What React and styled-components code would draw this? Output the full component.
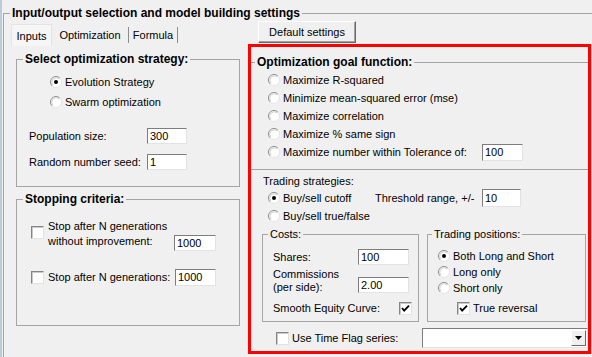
import React from 'react'
import styled, { createGlobalStyle } from 'styled-components'

const GlobalStyle = createGlobalStyle`
  html, body {
    margin: 0;
    padding: 0;
    background: #f0f0f0;
  }
  body {
    font-family: "Liberation Sans", Arial, sans-serif;
    font-size: 11px;
    color: #000;
  }
  * {
    box-sizing: border-box;
  }
`

const Radio = ({ checked }) => (
    <RadioIcon width="12" height="12" viewBox="0 0 12 12">
        <circle cx="6" cy="6" r="5.5" fill="#fff" />
        <path d="M2.1 9.9 A5.5 5.5 0 0 1 9.9 2.1" fill="none" stroke="#8d8d8d" strokeWidth="1" />
        <path d="M2.9 9.1 A4.4 4.4 0 0 1 9.1 2.9" fill="none" stroke="#d2d2d2" strokeWidth="1" />
        <path d="M9.9 2.1 A5.5 5.5 0 0 1 2.1 9.9" fill="none" stroke="#e4e4e4" strokeWidth="1" />
        {checked && <circle cx="6" cy="6" r="2" fill="#000" />}
    </RadioIcon>
)

const Check = ({ checked }) => (
    <CheckBox>
        {checked && (
            <svg width="11" height="11" viewBox="0 0 11 11">
                <polyline points="2,5 4.2,7.6 9,2.6" fill="none" stroke="#000" strokeWidth="1.8" />
            </svg>
        )}
    </CheckBox>
)

const App = () => {
    return (
        <>
            <GlobalStyle />
            <Window>
                <OuterGroup>
                    <GroupTitle $bold $offset={6}>Input/output selection and model building settings</GroupTitle>
                    <Columns>
                        <LeftColumn>
                            <TabStrip>
                                <Tab $w={41} $faint>Inputs</Tab>
                                <Tab $w={77} $sep>Optimization</Tab>
                                <Tab $w={49} $sep>Formula</Tab>
                            </TabStrip>
                            <TabPage>
                                <GroupBox $w={224} $mt={7} $pb={15}>
                                    <GroupTitle $bold $offset={6}>Select optimization strategy:</GroupTitle>
                                    <Row $indent={33} $mt={7}>
                                        <Radio checked />
                                        <OptionLabel>Evolution Strategy</OptionLabel>
                                    </Row>
                                    <Row $indent={33} $mt={2}>
                                        <Radio />
                                        <OptionLabel>Swarm optimization</OptionLabel>
                                    </Row>
                                    <Row $indent={12} $mt={16}>
                                        <FieldLabel $w={118}>Population size:</FieldLabel>
                                        <TextBox $w={40} $h={16} defaultValue="300" readOnly />
                                    </Row>
                                    <Row $indent={12} $mt={8}>
                                        <FieldLabel $w={118}>Random number seed:</FieldLabel>
                                        <TextBox $w={40} $h={16} defaultValue="1" readOnly />
                                    </Row>
                                </GroupBox>

                                <GroupBox $w={224} $mt={6} $pb={39}>
                                    <GroupTitle $bold $offset={6}>Stopping criteria:</GroupTitle>
                                    <Row $indent={14} $mt={13} $top $h={30}>
                                        <CheckSlot $mt={7}><Check /></CheckSlot>
                                        <MultiLabel $w={126} $lh={15}>Stop after N generations<br />without improvement:</MultiLabel>
                                        <TextBox $w={42} $h={16} $mt={16} defaultValue="1000" readOnly />
                                    </Row>
                                    <Row $indent={14} $mt={19}>
                                        <Check />
                                        <MultiLabel $w={127} $lh={15}>Stop after N generations:</MultiLabel>
                                        <TextBox $w={41} $h={17} defaultValue="1000" readOnly />
                                    </Row>
                                </GroupBox>
                            </TabPage>
                        </LeftColumn>

                        <RightColumn>
                            <DefaultButton>Default settings</DefaultButton>
                            <RedPanel>
                                <GoalGroup>
                                    <GroupTitle $bold $offset={4}>Optimization goal function:</GroupTitle>
                                    <Row $indent={17} $mt={2}>
                                        <Radio />
                                        <OptionLabel>Maximize R-squared</OptionLabel>
                                    </Row>
                                    <Row $indent={17}>
                                        <Radio />
                                        <OptionLabel>Minimize mean-squared error (mse)</OptionLabel>
                                    </Row>
                                    <Row $indent={17}>
                                        <Radio />
                                        <OptionLabel>Maximize correlation</OptionLabel>
                                    </Row>
                                    <Row $indent={17}>
                                        <Radio />
                                        <OptionLabel>Maximize % same sign</OptionLabel>
                                    </Row>
                                    <Row $indent={17}>
                                        <Radio />
                                        <OptionLabel $w={199}>Maximize number within Tolerance of:</OptionLabel>
                                        <TextBox $w={41} $h={17} defaultValue="100" readOnly />
                                    </Row>
                                </GoalGroup>

                                <SectionLabel>Trading strategies:</SectionLabel>
                                <Row $indent={17}>
                                    <Radio checked />
                                    <OptionLabel $w={92}>Buy/sell cutoff</OptionLabel>
                                    <FieldLabel $w={107}>Threshold range, +/-</FieldLabel>
                                    <TextBox $w={39} $h={18} defaultValue="10" readOnly />
                                </Row>
                                <Row $indent={17}>
                                    <Radio />
                                    <OptionLabel>Buy/sell true/false</OptionLabel>
                                </Row>

                                <SubGroups>
                                    <GroupBox $w={157} $pb={5}>
                                        <GroupTitle $offset={5}>Costs:</GroupTitle>
                                        <Row $indent={10} $mt={7}>
                                            <FieldLabel $w={85}>Shares:</FieldLabel>
                                            <TextBox $w={51} $h={16} defaultValue="100" readOnly />
                                        </Row>
                                        <Row $indent={10} $mt={2} $top $h={26}>
                                            <MultiLabel $w={85} $lh={13}>Commissions<br />(per side):</MultiLabel>
                                            <TextBox $w={51} $h={16} $mt={9} defaultValue="2.00" readOnly />
                                        </Row>
                                        <Row $indent={10} $mt={6} $h={16}>
                                            <FieldLabel $w={126}>Smooth Equity Curve:</FieldLabel>
                                            <Check checked />
                                        </Row>
                                    </GroupBox>
                                    <GroupBox $w={159} $pb={5}>
                                        <GroupTitle $offset={4}>Trading positions:</GroupTitle>
                                        <Row $indent={10} $mt={7} $h={16}>
                                            <Radio checked />
                                            <OptionLabel>Both Long and Short</OptionLabel>
                                        </Row>
                                        <Row $indent={10} $h={16}>
                                            <Radio />
                                            <OptionLabel>Long only</OptionLabel>
                                        </Row>
                                        <Row $indent={10} $h={16}>
                                            <Radio />
                                            <OptionLabel>Short only</OptionLabel>
                                        </Row>
                                        <Row $indent={29} $mt={4} $h={16}>
                                            <Check checked />
                                            <OptionLabel>True reversal</OptionLabel>
                                        </Row>
                                    </GroupBox>
                                </SubGroups>

                                <Row $indent={25} $mt={6} $h={20}>
                                    <Check />
                                    <OptionLabel $w={130}>Use Time Flag series:</OptionLabel>
                                    <Combo>
                                        <ComboButton>
                                            <svg width="7" height="4" viewBox="0 0 7 4">
                                                <polygon points="0,0 7,0 3.5,4" fill="#000" />
                                            </svg>
                                        </ComboButton>
                                    </Combo>
                                </Row>
                            </RedPanel>
                        </RightColumn>
                    </Columns>
                </OuterGroup>
            </Window>
        </>
    )
}

export default App

const Window = styled.div`
    width: 592px;
    height: 357px;
    overflow: hidden;
    background: #f0f0f0;
    border-left: 2px solid #bdcad8;
`

const OuterGroup = styled.fieldset`
    margin: 7px 0 0 1px;
    padding: 0;
    width: 640px;
    height: 420px;
    min-width: 0;
    border: 1px solid #a5a5a5;
`

const GroupTitle = styled.legend`
    margin-left: ${p => p.$offset}px;
    padding: 0 2px;
    height: 13px;
    line-height: 13px;
    font-size: ${p => (p.$bold ? 12 : 11)}px;
    font-weight: ${p => (p.$bold ? 'bold' : 'normal')};
    white-space: nowrap;
`

const Columns = styled.div`
    display: flex;
    align-items: flex-start;
`

const LeftColumn = styled.div`
    flex: none;
    width: 244px;
    padding-top: 2px;
`

const RightColumn = styled.div`
    flex: none;
    width: 344px;
    padding-top: 1px;
`

const TabStrip = styled.div`
    display: flex;
    align-items: flex-end;
    height: 24px;
    margin-left: 7px;
`

const Tab = styled.div`
    flex: none;
    width: ${p => p.$w}px;
    text-align: center;
    ${p => p.$faint && `
        height: 22px;
        line-height: 22px;
        background: #f6f6f6;
        border: 1px solid #e4e4e4;
        border-bottom: none;
    `}
    ${p => p.$sep && `
        height: 16px;
        line-height: 16px;
        margin-bottom: 3px;
        border-right: 1px solid #8c8c8c;
    `}
`

const TabPage = styled.div`
    padding-left: 12px;
`

const GroupBox = styled.fieldset`
    margin: ${p => p.$mt || 0}px 0 0 0;
    padding: 0 0 ${p => p.$pb || 0}px 0;
    width: ${p => p.$w}px;
    min-width: 0;
    border: 1px solid #a5a5a5;
`

const GoalGroup = styled.fieldset`
    margin: 9px 0 0 0;
    padding: 0 0 8px 0;
    min-width: 0;
    border: none;
    border-top: 1px solid #a5a5a5;
    border-bottom: 1px solid #a5a5a5;
`

const Row = styled.div`
    display: flex;
    align-items: ${p => (p.$top ? 'flex-start' : 'center')};
    height: ${p => p.$h || 18}px;
    margin-top: ${p => p.$mt || 0}px;
    padding-left: ${p => p.$indent || 0}px;
`

const RadioIcon = styled.svg`
    flex: none;
    display: block;
`

const CheckBox = styled.div`
    flex: none;
    width: 13px;
    height: 13px;
    background: #fff;
    border-top: 1px solid #858585;
    border-left: 1px solid #858585;
    border-right: 1px solid #e2e2e2;
    border-bottom: 1px solid #e2e2e2;
    box-shadow: inset 1px 1px 0 #c9c9c9;
    display: flex;
    align-items: center;
    justify-content: center;
`

const CheckSlot = styled.div`
    flex: none;
    margin-top: ${p => p.$mt || 0}px;
`

const OptionLabel = styled.span`
    flex: none;
    margin-left: 3px;
    width: ${p => (p.$w ? `${p.$w}px` : 'auto')};
    white-space: nowrap;
`

const FieldLabel = styled.span`
    flex: none;
    width: ${p => p.$w}px;
    white-space: nowrap;
`

const MultiLabel = styled.div`
    flex: none;
    width: ${p => p.$w}px;
    line-height: ${p => p.$lh}px;
    margin-left: ${p => (p.$w > 100 ? 4 : 0)}px;
    white-space: nowrap;
`

const TextBox = styled.input`
    flex: none;
    width: ${p => p.$w}px;
    height: ${p => p.$h}px;
    margin: ${p => p.$mt || 0}px 0 0 0;
    padding: 0 2px;
    font: inherit;
    color: #000;
    background: #fff;
    border-top: 1px solid #7d7d7d;
    border-left: 1px solid #7d7d7d;
    border-right: 1px solid #e3e3e3;
    border-bottom: 1px solid #e3e3e3;
    outline: none;
`

const DefaultButton = styled.div`
    margin-left: 10px;
    width: 98px;
    height: 22px;
    line-height: 20px;
    text-align: center;
    background: #f0f0f0;
    border-top: 1px solid #fff;
    border-left: 1px solid #fff;
    border-right: 1px solid #6a6a6a;
    border-bottom: 1px solid #6a6a6a;
    box-shadow: inset -1px -1px 0 #a0a0a0;
`

const RedPanel = styled.div`
    margin-top: 1px;
    width: 343px;
    height: 310px;
    border: 3px solid #f00;
`

const SectionLabel = styled.div`
    margin-top: 3px;
    padding-left: 12px;
    height: 16px;
    line-height: 16px;
`

const SubGroups = styled.div`
    display: flex;
    gap: 8px;
    margin-top: 3px;
    padding-left: 11px;
`

const Combo = styled.div`
    flex: none;
    width: 166px;
    height: 20px;
    background: #fff;
    border-top: 1px solid #7d7d7d;
    border-left: 1px solid #7d7d7d;
    border-right: 1px solid #e3e3e3;
    border-bottom: 1px solid #e3e3e3;
    display: flex;
    justify-content: flex-end;
    padding: 1px;
`

const ComboButton = styled.div`
    width: 15px;
    height: 16px;
    background: #f0f0f0;
    border-top: 1px solid #fff;
    border-left: 1px solid #fff;
    border-right: 1px solid #6a6a6a;
    border-bottom: 1px solid #6a6a6a;
    display: flex;
    align-items: center;
    justify-content: center;
`
